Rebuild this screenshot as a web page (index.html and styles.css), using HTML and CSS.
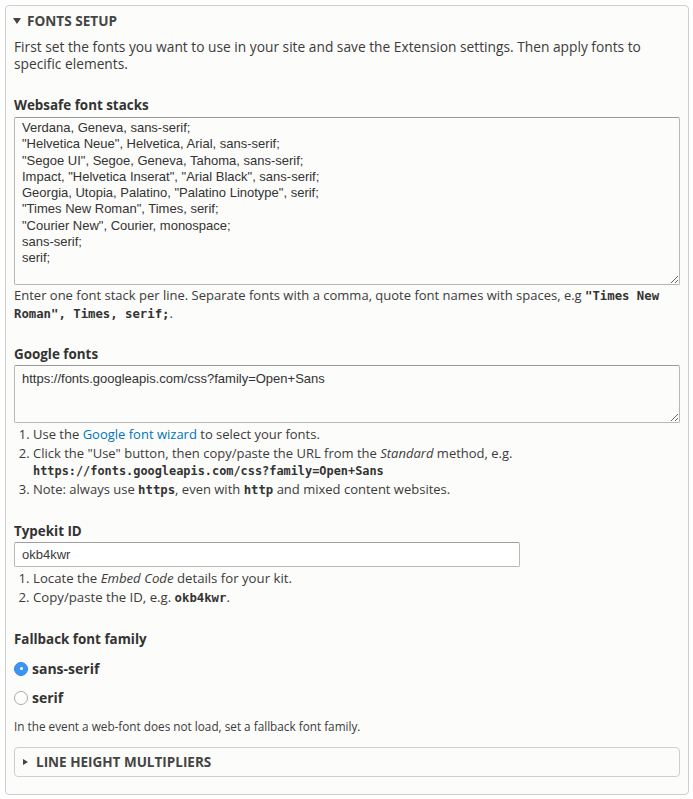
FILE: index.html
```html
<!DOCTYPE html>
<html>
<head>
<meta charset="utf-8">
<link rel="stylesheet" href="styles.css">
</head>
<body>
<div class="fieldset">
  <div class="legend"><span class="tri-down"></span>FONTS SETUP</div>
  <div class="content">
    <p class="intro">First set the fonts you want to use in your site and save the Extension settings. Then apply fonts to specific elements.</p>

    <div class="field field-websafe">
      <div class="label">Websafe font stacks</div>
      <textarea class="ta ta-big">Verdana, Geneva, sans-serif;
"Helvetica Neue", Helvetica, Arial, sans-serif;
"Segoe UI", Segoe, Geneva, Tahoma, sans-serif;
Impact, "Helvetica Inserat", "Arial Black", sans-serif;
Georgia, Utopia, Palatino, "Palatino Linotype", serif;
"Times New Roman", Times, serif;
"Courier New", Courier, monospace;
sans-serif;
serif;</textarea>
      <div class="desc">Enter one font stack per line. Separate fonts with a comma, quote font names with spaces, e.g <code>"Times New</code><br><code>Roman", Times, serif;</code>.</div>
    </div>

    <div class="field field-google">
      <div class="label label-google">Google fonts</div>
      <textarea class="ta ta-small">https://fonts.googleapis.com/css?family=Open+Sans</textarea>
      <ol class="steps">
        <li>Use the <a href="#">Google font wizard</a> to select your fonts.</li>
        <li>Click the "Use" button, then copy/paste the URL from the <em>Standard</em> method, e.g.<br><code class="url">https://fonts.googleapis.com/css?family=Open+Sans</code></li>
        <li>Note: always use <code>https</code>, even with <code>http</code> and mixed content websites.</li>
      </ol>
    </div>

    <div class="field">
      <div class="label label-typekit">Typekit ID</div>
      <div class="input">okb4kwr</div>
      <ol class="steps steps-typekit">
        <li>Locate the <em>Embed Code</em> details for your kit.</li>
        <li>Copy/paste the ID, e.g. <code>okb4kwr</code>.</li>
      </ol>
    </div>

    <div class="field">
      <div class="label">Fallback font family</div>
      <div class="radios">
        <div class="radio"><span class="dot checked"></span><span class="rlabel">sans-serif</span></div>
        <div class="radio"><span class="dot"></span><span class="rlabel">serif</span></div>
      </div>
      <div class="small">In the event a web-font does not load, set a fallback font family.</div>
    </div>

    <div class="details"><span class="tri-right"></span>LINE HEIGHT MULTIPLIERS</div>
  </div>
</div>
</body>
</html>
```
FILE: styles.css
```css
html, body {
  margin: 0;
  padding: 0;
  background: #ffffff;
}
body {
  font-family: "Open Sans", "DejaVu Sans", sans-serif;
  font-size: 13px;
  color: #3b3b3b;
}
.fieldset {
  margin: 5px 4px 0 5px;
  height: 790px;
  box-sizing: border-box;
  border: 1px solid #cfcfcf;
  border-radius: 4px;
  background: #fcfcfa;
}
.legend {
  padding: 6px 8px 0 7px;
  line-height: 18px;
  font-weight: bold;
  font-size: 13.6px;
  color: #444;
  display: flex;
  align-items: center;
}
.tri-down {
  width: 0;
  height: 0;
  border-left: 4px solid transparent;
  border-right: 4px solid transparent;
  border-top: 6px solid #444;
  margin-right: 6px;
}
.content {
  padding: 0 8px;
}
.intro {
  margin: 8px 0 0;
  line-height: 17px;
  font-size: 13.75px;
}
.field {
  margin-top: 25px;
}
.field-google {
  margin-top: 23.3px;
}
.label {
  font-weight: bold;
  font-size: 13.4px;
  line-height: 16px;
  color: #333;
  margin-bottom: 4px;
}
.label-google {
  margin-bottom: 3px;
}
.label-typekit {
  margin-bottom: 3px;
}
.ta {
  display: block;
  width: 100%;
  box-sizing: border-box;
  margin: 0;
  font-family: "Liberation Sans", Arial, sans-serif;
  font-size: 13px;
  line-height: 16.3px;
  color: #333;
  background: #fcfcfa;
  border: 1px solid #b8b8b8;
  border-top-color: #999;
  border-radius: 2px;
  padding: 2px 7px;
  outline: none;
}
.ta-big {
  height: 168px;
}
.ta-small {
  height: 58px;
  padding-top: 5px;
}
.desc {
  margin-top: 2px;
  line-height: 17.7px;
}
code {
  font-family: "DejaVu Sans Mono", "Liberation Mono", monospace;
  font-weight: bold;
  font-size: 12.3px;
  line-height: 1;
  color: #333;
}
code.url {
  font-size: 11.9px;
}
.steps {
  margin: 3px 0 0;
  padding-left: 19px;
  line-height: 17px;
}
.steps li {
  margin-bottom: 2px;
}
.steps-typekit {
  font-size: 13.2px;
}
.steps a {
  color: #0074bd;
  text-decoration: none;
}
.input {
  width: 506px;
  height: 25px;
  box-sizing: border-box;
  border: 1px solid #b8b8b8;
  border-top-color: #a0a0a0;
  border-radius: 2px;
  padding: 0 7px;
  line-height: 23px;
  font-family: "Liberation Sans", Arial, sans-serif;
  font-size: 13px;
  background: #ffffff;
}
.radios {
  margin-top: 12px;
  display: flex;
  flex-direction: column;
  gap: 9px;
}
.radio {
  display: flex;
  align-items: center;
  height: 20px;
}
.dot {
  width: 14px;
  height: 14px;
  box-sizing: border-box;
  border-radius: 50%;
  border: 1px solid #aaa;
  background: #fff;
  margin-right: 4px;
  position: relative;
}
.dot.checked {
  background: #3e95f1;
  border-color: #2f86e6;
}
.dot.checked::after {
  content: "";
  position: absolute;
  left: 4.5px;
  top: 4.5px;
  width: 3px;
  height: 3px;
  border-radius: 50%;
  background: #fff;
}
.rlabel {
  font-weight: bold;
  font-size: 14px;
  color: #333;
}
.small {
  margin-top: 10px;
  font-size: 11.75px;
  line-height: 16px;
}
.details {
  margin-top: 13px;
  height: 30px;
  box-sizing: border-box;
  border: 1px solid #cfcfcf;
  border-radius: 4px;
  display: flex;
  align-items: center;
  padding-left: 8px;
  font-weight: bold;
  font-size: 13.5px;
  color: #444;
}
.tri-right {
  width: 0;
  height: 0;
  border-top: 3.5px solid transparent;
  border-bottom: 3.5px solid transparent;
  border-left: 5px solid #444;
  margin-right: 8px;
}
```
